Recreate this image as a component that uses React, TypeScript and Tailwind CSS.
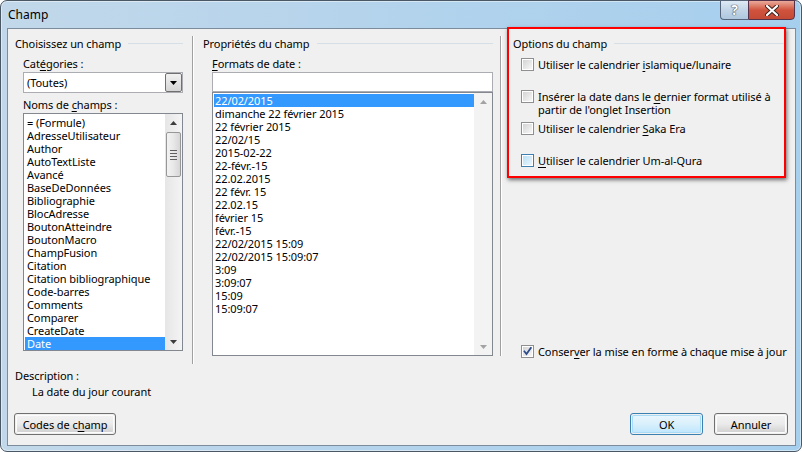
import React from "react";

const leftItems = [
  "= (Formule)",
  "AdresseUtilisateur",
  "Author",
  "AutoTextListe",
  "Avancé",
  "BaseDeDonnées",
  "Bibliographie",
  "BlocAdresse",
  "BoutonAtteindre",
  "BoutonMacro",
  "ChampFusion",
  "Citation",
  "Citation bibliographique",
  "Code-barres",
  "Comments",
  "Comparer",
  "CreateDate",
  "Date",
];

const formats = [
  "22/02/2015",
  "dimanche 22 février 2015",
  "22 février 2015",
  "22/02/15",
  "2015-02-22",
  "22-févr.-15",
  "22.02.2015",
  "22 févr. 15",
  "22.02.15",
  "février 15",
  "févr.-15",
  "22/02/2015 15:09",
  "22/02/2015 15:09:07",
  "3:09",
  "3:09:07",
  "15:09",
  "15:09:07",
];

function GroupHeader({ text, pl, pr }: { text: string; pl: string; pr: string }) {
  return (
    <div className={`flex items-center h-[15px] leading-[15px] ${pl} ${pr}`}>
      <span className="whitespace-nowrap">{text}</span>
      <div className="flex-1 ml-[7px] h-px bg-[#d5dfe5]" />
    </div>
  );
}

function Check({ variant }: { variant: "plain" | "hover" | "checked" }) {
  if (variant === "hover") {
    return (
      <div className="w-[13px] h-[13px] shrink-0 border border-[#3c7fb1] bg-white p-[1px]">
        <div className="w-full h-full bg-linear-to-br from-[#b9dff5] to-[#e9f6fd]" />
      </div>
    );
  }
  return (
    <div className="w-[13px] h-[13px] shrink-0 border border-[#8f8f8f] bg-white p-[1px] relative">
      <div className="w-full h-full bg-linear-to-br from-[#d4d4d4] to-[#f7f7f7]" />
      {variant === "checked" && (
        <svg className="absolute left-0 top-0" width="11" height="11" viewBox="0 0 11 11">
          <path d="M2.5 5.5 L4.5 8 L8.8 2" stroke="#2c4a8c" strokeWidth="1.8" fill="none" strokeLinecap="square" />
        </svg>
      )}
    </div>
  );
}

function U({ children }: { children: React.ReactNode }) {
  return <span className="underline underline-offset-[2px] decoration-[1px]">{children}</span>;
}

function Btn({ children, w, def }: { children: React.ReactNode; w: string; def?: boolean }) {
  return (
    <div
      className={`${w} h-[22px] rounded-[3px] border ${
        def ? "border-[#3c7fb1]" : "border-[#707070]"
      } p-px`}
    >
      <div
        className={`w-full h-full rounded-[2px] flex items-center justify-center leading-[15px] ${
          def
            ? "bg-linear-to-b from-[#eaf6fd] via-[#d9f0fc] to-[#bee6fd] shadow-[inset_0_0_0_1px_#a8dbf7]"
            : "bg-linear-to-b from-[#f2f2f2] via-[#ebebeb] to-[#cfcfcf] shadow-[inset_0_0_0_1px_#fcfcfc]"
        }`}
      >
        {children}
      </div>
    </div>
  );
}

function Tri({ up, color }: { up?: boolean; color: string }) {
  return (
    <svg width="7" height="4" viewBox="0 0 7 4">
      <path d={up ? "M0 4 L3.5 0 L7 4 Z" : "M0 0 L7 0 L3.5 4 Z"} fill={color} />
    </svg>
  );
}

export default function App() {
  return (
    <div className="w-[802px] h-[452px] bg-white font-['Noto_Sans',sans-serif] text-[11px] tracking-[-0.08px] text-black relative overflow-hidden">
      <div className="w-full h-full rounded-[7px] border border-[#4a5866] bg-linear-to-r from-[#c2d8ea] via-[#b3d3ec] to-[#a6cfee] shadow-[inset_0_0_0_1px_rgba(255,255,255,0.45)] flex flex-col pl-[6px] pr-[5px] pb-[5px]">
        {/* Title bar */}
        <div className="h-[27px] flex items-start justify-between shrink-0">
          <div className="pl-px pt-[6px] text-[12px] leading-[16px] tracking-normal text-black">Champ</div>
          <div className="flex -mt-px mr-[1px]">
            <div className="w-[28px] h-[20px] rounded-bl-[4px] border border-[#56657a] border-r-0 bg-linear-to-b from-[#dfeaf5] via-[#c2d5e7] to-[#aec8dd] flex items-center justify-center text-white font-bold text-[14px] leading-none [text-shadow:0_0_1px_#1e2a38,0_0_1px_#1e2a38]">
              ?
            </div>
            <div className="w-[47px] h-[20px] rounded-br-[4px] border border-[#56334a] bg-linear-to-b from-[#e9a99a] via-[#d0533d] to-[#c44a35] flex items-center justify-center">
              <svg width="14" height="11" viewBox="0 0 14 11">
                <path d="M2 1 L12 10 M12 1 L2 10" stroke="#3b1f1a" strokeWidth="4" strokeLinecap="round" />
                <path d="M2 1 L12 10 M12 1 L2 10" stroke="#ffffff" strokeWidth="2.2" strokeLinecap="round" />
              </svg>
            </div>
          </div>
        </div>

        {/* Client area */}
        <div className="flex-1 bg-[#f0f0f0] border border-[#7d8c9c] flex flex-col">
          {/* Top row */}
          <div className="h-[335px] pt-[7px] flex shrink-0">
            {/* Left column */}
            <div className="w-[184px] flex flex-col">
              <GroupHeader text="Choisissez un champ" pl="pl-[7px]" pr="pr-[9px]" />
              <div className="mt-[5px] pl-[15px] leading-[15px] h-[15px]">
                Cat<U>é</U>gories :
              </div>
              <div className="mt-px ml-[15px] w-[160px] h-[21px] border border-[#abadb3] bg-white flex items-center">
                <div className="flex-1 pl-[3px] leading-[15px]">(Toutes)</div>
                <div className="w-[17px] h-[19px] border border-[#707070] rounded-[2px] bg-linear-to-b from-[#f2f2f2] to-[#d5d5d5] flex items-center justify-center">
                  <Tri color="#000" />
                </div>
              </div>
              <div className="mt-[4px] pl-[15px] leading-[15px] h-[15px]">
                Noms de <U>c</U>hamps :
              </div>
              <div className="mt-px ml-[15px] w-[160px] h-[238px] border border-[#828790] bg-white flex">
                <div className="flex-1 pt-[2px] pl-px">
                  {leftItems.map((it) => (
                    <div
                      key={it}
                      className={`h-[13px] leading-[13px] pl-[2px] whitespace-nowrap ${
                        it === "Date" ? "bg-[#3399ff] text-white" : ""
                      }`}
                    >
                      {it}
                    </div>
                  ))}
                </div>
                <div className="w-[17px] bg-linear-to-r from-[#e6e6e6] to-[#f4f4f4] flex flex-col items-center">
                  <div className="h-[17px] flex items-center justify-center">
                    <Tri up color="#3d3d3d" />
                  </div>
                  <div className="w-[15px] h-[45px] mt-px border border-[#979797] rounded-[2px] bg-linear-to-r from-[#f3f3f3] via-[#e8e8e8] to-[#d6d6d6] flex flex-col items-center justify-center gap-[2px]">
                    <div className="w-[7px] h-px bg-[#5f5f5f]" />
                    <div className="w-[7px] h-px bg-[#5f5f5f]" />
                    <div className="w-[7px] h-px bg-[#5f5f5f]" />
                    <div className="w-[7px] h-px bg-[#5f5f5f]" />
                  </div>
                  <div className="flex-1" />
                  <div className="h-[17px] flex items-center justify-center">
                    <Tri color="#3d3d3d" />
                  </div>
                </div>
              </div>
            </div>

            {/* Separator 1 */}
            <div className="w-[2px] border-l border-[#a0a0a0] bg-white shrink-0" />

            {/* Middle column */}
            <div className="w-[306px] flex flex-col">
              <GroupHeader text="Propriétés du champ" pl="pl-[9px]" pr="pr-[7px]" />
              <div className="mt-[5px] pl-[18px] leading-[15px] h-[15px]">
                <U>F</U>ormats de date :
              </div>
              <div className="mt-px ml-[18px] w-[281px] h-[20px] border border-[#abadb3] bg-white" />
              <div className="ml-[18px] w-[281px] h-[264px] border border-[#828790] bg-white flex">
                <div className="flex-1 pt-px pl-px">
                  {formats.map((f, i) => (
                    <div
                      key={f}
                      className={`h-[13px] leading-[13px] pl-[1px] whitespace-nowrap ${
                        i === 0 ? "bg-[#3399ff] text-white" : ""
                      }`}
                    >
                      {f}
                    </div>
                  ))}
                </div>
                <div className="w-[18px] bg-[#f3f3f3] flex flex-col items-center">
                  <div className="h-[17px] flex items-center justify-center">
                    <Tri up color="#a3a3a3" />
                  </div>
                  <div className="flex-1" />
                  <div className="h-[17px] flex items-center justify-center">
                    <Tri color="#a3a3a3" />
                  </div>
                </div>
              </div>
            </div>

            {/* Separator 2 */}
            <div className="w-[2px] h-[320px] border-l border-[#a0a0a0] bg-white shrink-0" />

            {/* Right column */}
            <div className="flex-1 flex flex-col">
              <GroupHeader text="Options du champ" pl="pl-[11px]" pr="pr-[11px]" />
              <div className="mt-[7px] pl-[19px] flex items-start gap-[4px] leading-[13px]">
                <Check variant="plain" />
                <span>
                  Utiliser le calendrier <U>i</U>slamique/lunaire
                </span>
              </div>
              <div className="mt-[19px] pl-[19px] flex items-start gap-[4px] leading-[13px]">
                <Check variant="plain" />
                <span>
                  Insérer la date dans le <U>d</U>ernier format utilisé à
                  <br />
                  partir de l'onglet Insertion
                </span>
              </div>
              <div className="mt-[6px] pl-[19px] flex items-start gap-[4px] leading-[13px]">
                <Check variant="plain" />
                <span>
                  Utiliser le calendrier <U>S</U>aka Era
                </span>
              </div>
              <div className="mt-[19px] pl-[19px] flex items-start gap-[4px] leading-[13px]">
                <Check variant="hover" />
                <span>
                  <U>U</U>tiliser le calendrier Um-al-Qura
                </span>
              </div>
              <div className="mt-auto mb-[6px] pl-[19px] flex items-start gap-[4px] leading-[13px]">
                <Check variant="checked" />
                <span className="whitespace-nowrap">
                  Conser<U>v</U>er la mise en forme à chaque mise à jour
                </span>
              </div>
            </div>
          </div>

          {/* Description */}
          <div className="mt-[4px] pl-[7px] leading-[15px] h-[15px]">Description :</div>
          <div className="mt-px pl-[24px] leading-[15px] h-[15px]">La date du jour courant</div>

          {/* Buttons */}
          <div className="mt-[14px] flex items-center pl-[6px] pr-[7px]">
            <Btn w="w-[102px]">
              Codes de c<U>h</U>amp
            </Btn>
            <div className="flex-1" />
            <Btn w="w-[73px]" def>
              OK
            </Btn>
            <div className="w-[11px]" />
            <Btn w="w-[74px]">Annuler</Btn>
          </div>
        </div>
      </div>

      {/* Red annotation box */}
      <div className="absolute left-[507px] top-[27px] w-[279px] h-[151px] border-2 border-[#ff0000] shadow-[1px_2px_4px_rgba(0,0,0,0.55)] pointer-events-none" />
    </div>
  );
}
